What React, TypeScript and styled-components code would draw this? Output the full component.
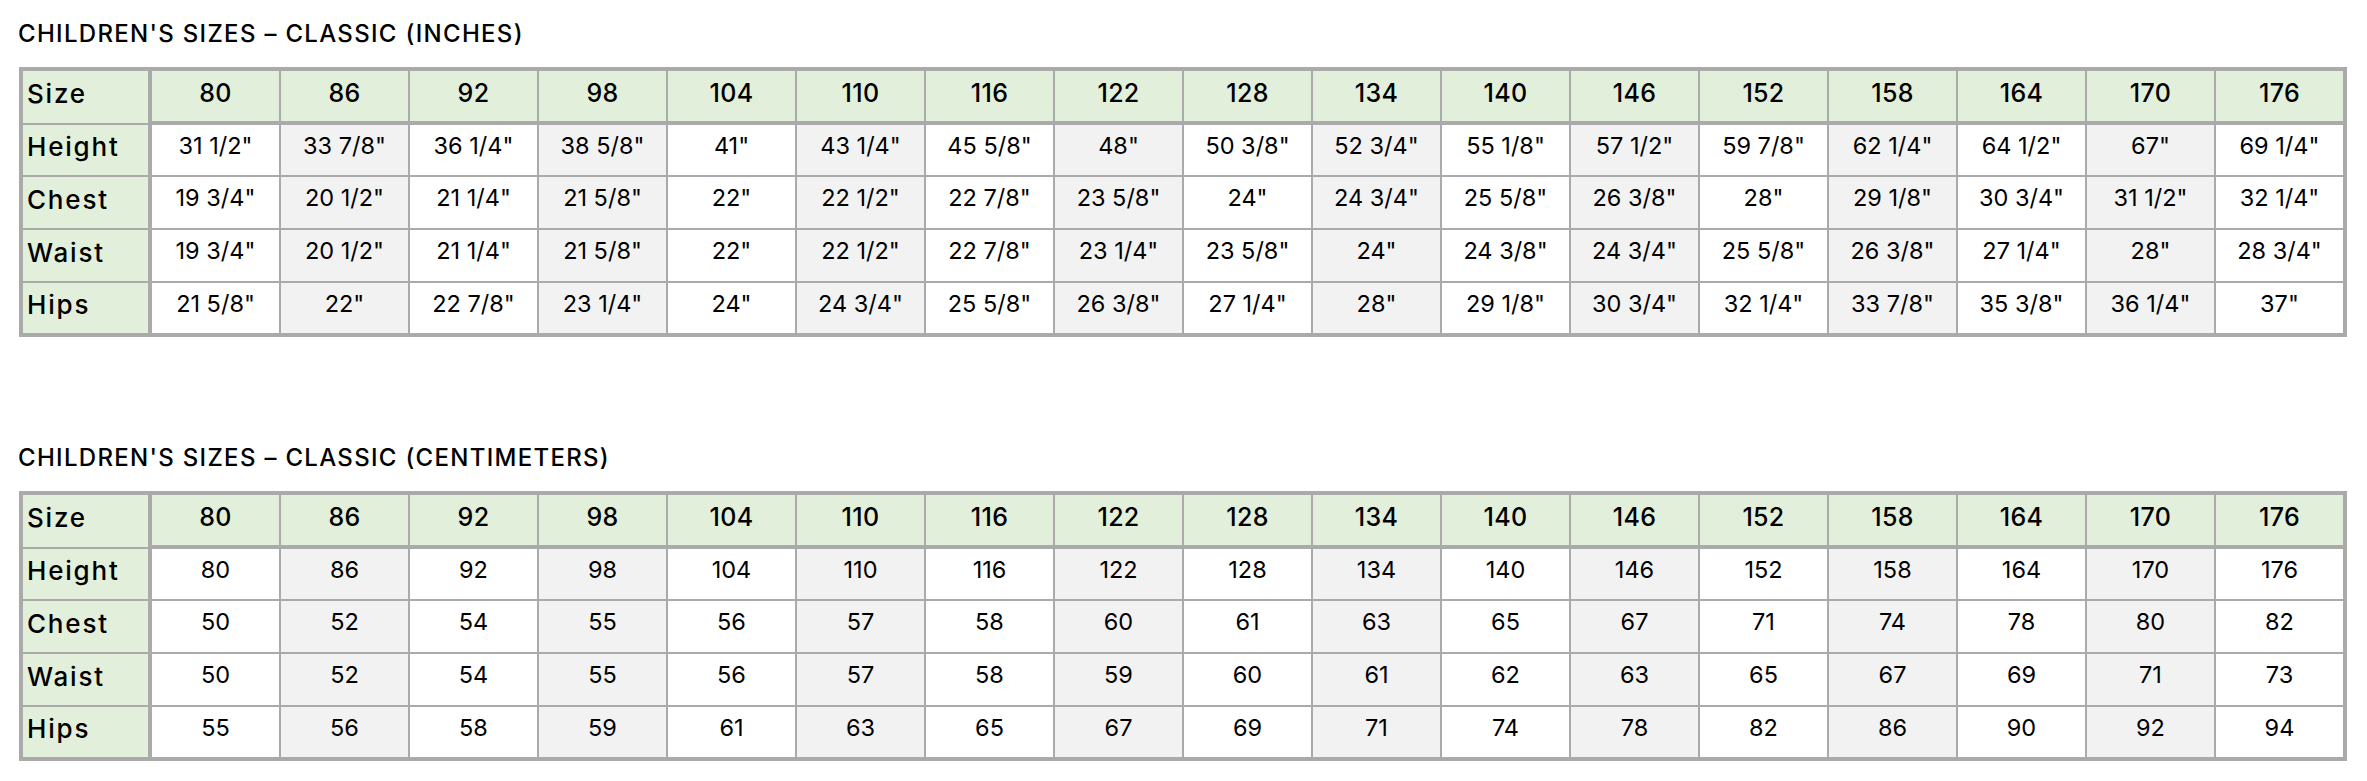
import React from 'react';
import styled, { createGlobalStyle } from 'styled-components';

const GlobalStyle = createGlobalStyle`
  html, body {
    margin: 0;
    padding: 0;
    background: #ffffff;
  }

  body {
    font-family: Inter, 'Noto Sans', sans-serif;
    color: #000000;
  }
`;

const Page = styled.div`
  display: flex;
  flex-direction: column;
  gap: 106px;
  padding: 19px 20px 0 19px;
`;

const Section = styled.section`
  display: flex;
  flex-direction: column;
  gap: 18px;
`;

const Title = styled.h2`
  margin: 0 0 0 -1px;
  font-size: 24px;
  line-height: 30px;
  font-weight: 500;
  letter-spacing: 1.3px;
  white-space: nowrap;
`;

const Sheet = styled.div`
  display: grid;
  grid-template-columns: 129px repeat(16, 129px) 127px;
  grid-template-rows: 54px 52px 53px 53px 50px;
  width: 2328px;
  box-sizing: border-box;
  border: 4px solid #aaaaaa;
`;

type CellProps = {
  $head?: boolean;
  $label?: boolean;
  $shaded?: boolean;
  $lastCol?: boolean;
  $lastRow?: boolean;
};

const Cell = styled.div<CellProps>`
  box-sizing: border-box;
  display: flex;
  align-items: center;
  justify-content: ${(p) => (p.$label ? 'flex-start' : 'center')};
  padding: ${(p) => (p.$label ? '0 0 0 4px' : '0')};
  padding-bottom: ${(p) => (p.$head || p.$label ? '7px' : '10px')};
  background: ${(p) => (p.$head || p.$label ? '#e2efda' : p.$shaded ? '#f2f2f2' : '#ffffff')};
  border-right: ${(p) => (p.$lastCol ? '0' : p.$label ? '4px' : '2px')} solid #aaaaaa;
  border-bottom: ${(p) => (p.$lastRow ? '0' : p.$head ? '4px' : '2px')} solid #aaaaaa;
  font-size: ${(p) => (p.$label ? '26px' : p.$head ? '25px' : '23.5px')};
  font-weight: ${(p) => (p.$head || p.$label ? 500 : 400)};
  letter-spacing: ${(p) => (p.$label ? '1.8px' : p.$head ? '0.3px' : '0')};
  white-space: nowrap;
`;

const sizes = ['80', '86', '92', '98', '104', '110', '116', '122', '128', '134', '140', '146', '152', '158', '164', '170', '176'];

type Row = { label: string; values: string[] };

const inches: Row[] = [
  {
    label: 'Height',
    values: ['31 1/2"', '33 7/8"', '36 1/4"', '38 5/8"', '41"', '43 1/4"', '45 5/8"', '48"', '50 3/8"', '52 3/4"', '55 1/8"', '57 1/2"', '59 7/8"', '62 1/4"', '64 1/2"', '67"', '69 1/4"'],
  },
  {
    label: 'Chest',
    values: ['19 3/4"', '20 1/2"', '21 1/4"', '21 5/8"', '22"', '22 1/2"', '22 7/8"', '23 5/8"', '24"', '24 3/4"', '25 5/8"', '26 3/8"', '28"', '29 1/8"', '30 3/4"', '31 1/2"', '32 1/4"'],
  },
  {
    label: 'Waist',
    values: ['19 3/4"', '20 1/2"', '21 1/4"', '21 5/8"', '22"', '22 1/2"', '22 7/8"', '23 1/4"', '23 5/8"', '24"', '24 3/8"', '24 3/4"', '25 5/8"', '26 3/8"', '27 1/4"', '28"', '28 3/4"'],
  },
  {
    label: 'Hips',
    values: ['21 5/8"', '22"', '22 7/8"', '23 1/4"', '24"', '24 3/4"', '25 5/8"', '26 3/8"', '27 1/4"', '28"', '29 1/8"', '30 3/4"', '32 1/4"', '33 7/8"', '35 3/8"', '36 1/4"', '37"'],
  },
];

const centimeters: Row[] = [
  { label: 'Height', values: sizes },
  { label: 'Chest', values: ['50', '52', '54', '55', '56', '57', '58', '60', '61', '63', '65', '67', '71', '74', '78', '80', '82'] },
  { label: 'Waist', values: ['50', '52', '54', '55', '56', '57', '58', '59', '60', '61', '62', '63', '65', '67', '69', '71', '73'] },
  { label: 'Hips', values: ['55', '56', '58', '59', '61', '63', '65', '67', '69', '71', '74', '78', '82', '86', '90', '92', '94'] },
];

type ChartProps = {
  title: string;
  rows: Row[];
};

const SizeChart = ({ title, rows }: ChartProps) => {
  const last = sizes.length - 1;

  return (
    <Section>
      <Title>{title}</Title>
      <Sheet>
        <Cell $label>Size</Cell>
        {sizes.map((s, i) => (
          <Cell key={s} $head $lastCol={i === last}>
            {s}
          </Cell>
        ))}
        {rows.map((row, r) => {
          const lastRow = r === rows.length - 1;
          return (
            <React.Fragment key={row.label}>
              <Cell $label $lastRow={lastRow}>
                {row.label}
              </Cell>
              {row.values.map((v, i) => (
                <Cell key={i} $shaded={i % 2 === 1} $lastCol={i === last} $lastRow={lastRow}>
                  {v}
                </Cell>
              ))}
            </React.Fragment>
          );
        })}
      </Sheet>
    </Section>
  );
};

const App = () => (
  <>
    <GlobalStyle />
    <Page>
      <SizeChart title="CHILDREN'S SIZES – CLASSIC (INCHES)" rows={inches} />
      <SizeChart title="CHILDREN'S SIZES – CLASSIC (CENTIMETERS)" rows={centimeters} />
    </Page>
  </>
);

export default App;
